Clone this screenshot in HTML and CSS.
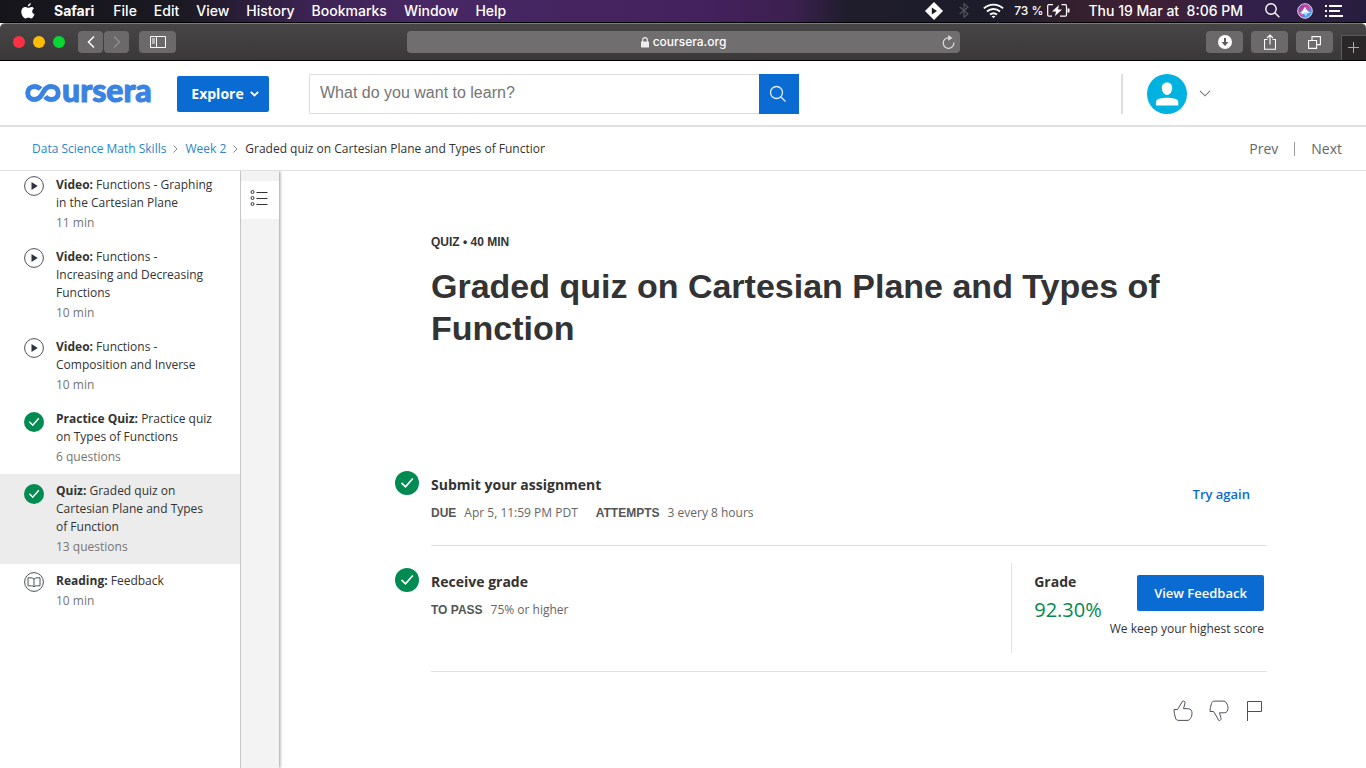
FILE: index.html
```html
<!DOCTYPE html>
<html lang="en">
<head>
<meta charset="utf-8">
<meta name="viewport" content="width=device-width, initial-scale=1">
<title>Graded quiz on Cartesian Plane and Types of Function | Coursera</title>
<link rel="stylesheet" href="styles.css">
</head>
<body>
<div class="menubar">
  <nav class="menus" aria-label="Menu bar">
    <svg class="apple" width="14" height="16" viewBox="0 0 14 16" fill="#fff" aria-hidden="true"><path d="M9.8 0c.1 1.600-1.200 3.300-2.900 3.400C6.700 1.800 8.200.2 9.800 0zM12.900 5.500c-2.600 1.600-2 4.700.6 5.800-.5 1.500-1.800 4-3.100 4.200-1.100.1-1.500-.7-2.900-.7s-1.800.7-2.900.7C2.500 15.400.3 11.800.3 8.800.3 5.800 2.200 4 4.200 4c1.300 0 2.200.8 3.200.8.9 0 2-.9 3.500-.8.8 0 1.600.6 2 1.500z"/></svg>
    <b>Safari</b><span>File</span><span>Edit</span><span>View</span><span>History</span><span>Bookmarks</span><span>Window</span><span>Help</span>
  </nav>
  <div class="status">
    <svg width="18" height="18" viewBox="0 0 18 18" aria-hidden="true"><path d="M9 0l9 9-9 9-9-9z" fill="#fff"/><path d="M6.800 5.500L12 9l-5.200 3.500z" fill="#1b1a24"/></svg>
    <svg class="bluetooth" width="10" height="15" viewBox="0 0 10 15" fill="none" stroke="#55525c" stroke-width="1.200" aria-hidden="true"><path d="M.7 4l8.300 7-4 3.300V.7l4 3.300-8.300 7"/></svg>
    <svg class="wifi" width="21" height="16" viewBox="0 0 21 16" fill="none" stroke="#fff" stroke-width="1.900" aria-hidden="true"><path d="M.9 5.400c5.500-5 13.700-5 19.200 0M4 8.500c3.800-3.400 9.200-3.400 13 0M7 11.600c2.200-1.800 4.800-1.800 7 0"/><path d="M8.600 13.300c1.200-.9 2.600-.9 3.800 0L10.500 15.200z" fill="#fff" stroke="none"/></svg>
    <span class="percent">73 %</span>
    <svg class="battery" width="23" height="13" viewBox="0 0 23 13" fill="none" stroke="#fff" stroke-width="1.200" aria-hidden="true"><path d="M6 .7H1.800Q.7.700.7 2v9q0 1.200 1.100 1.200H5M14.500.7h3.800q1.200 0 1.200 1.300v9q0 1.200-1.200 1.200H13"/><path d="M12 1L5 7.400h4L8 12l7-6.600h-4z" fill="#fff" stroke="none"/><path d="M21.500 4.500v4" stroke-width="2"/></svg>
    <time class="clock">Thu 19 Mar at&nbsp; 8:06 PM</time>
    <svg class="spotlight" width="15" height="15" viewBox="0 0 15 15" fill="none" stroke="#fff" stroke-width="1.400" aria-hidden="true"><circle cx="6" cy="6" r="5.200"/><path d="M9.800 9.800l4.500 4.500"/></svg>
    <svg class="siri" width="16" height="16" viewBox="0 0 16 16" aria-hidden="true"><defs><linearGradient id="siri" x1="0" y1="0" x2="1" y2="1"><stop offset="0" stop-color="#53479b"/><stop offset=".45" stop-color="#df3aa8"/><stop offset=".7" stop-color="#4f8fe8"/><stop offset="1" stop-color="#49d6e5"/></linearGradient></defs><circle cx="8" cy="8" r="7.300" fill="url(#siri)" stroke="#d9d7e6"/><path d="M2 10c3-1 4-4 6-6 1 3 4 5 6 6-3 0-4 0-5 4-1-3-3-4-7-4z" fill="#8ee9fa"/><path d="M8 4c1 3 3 5 5 6l-5-1-4 3z" fill="#fff"/></svg>
    <svg width="18" height="12" viewBox="0 0 18 12" stroke="#fff" stroke-width="2" aria-hidden="true"><path d="M0 1h2M4 1h13M0 6h2M4 6h11M0 11h2M4 11h14"/></svg>
  </div>
</div>

<div class="toolbar">
  <div class="tools">
    <span class="light red"></span><span class="light yellow"></span><span class="light green"></span>
    <div class="history">
      <button class="tool" aria-label="Back"><svg width="8" height="14" viewBox="0 0 8 14" fill="none" stroke="#fff" stroke-width="1.500"><path d="M7 1.500L1.500 7 7 12.500"/></svg></button>
      <button class="tool" aria-label="Forward"><svg width="8" height="14" viewBox="0 0 8 14" fill="none" stroke="#929091" stroke-width="1.300"><path d="M1 1.500L6.500 7 1 12.500"/></svg></button>
    </div>
    <button class="tool wide" aria-label="Show sidebar"><svg width="16" height="12" viewBox="0 0 16 12" fill="none" stroke="#fff"><path d="M.5.500h15v11H.5zM6.500.5v11M2 3h3M2 5h3M2 7h3"/></svg></button>
  </div>
  <div class="address">
    <svg width="8" height="11" viewBox="0 0 8 11" aria-hidden="true"><path d="M1.700 5V3Q1.700.7 4 .7T6.300 3v2" fill="none" stroke="#eee" stroke-width="1.200"/><rect y="4.500" width="8" height="6" rx=".5" fill="#eee"/></svg>
    <span>coursera.org</span>
    <button class="reload" aria-label="Reload"><svg width="13" height="14" viewBox="0 0 13 14"><path d="M11.800 7.500A5.300 5.300 0 1 1 6.500 2.800" fill="none" stroke="#ddd" stroke-width="1.200"/><path d="M6.200 0l4.300 2.900-4.300 2.800z" fill="#ddd"/></svg></button>
  </div>
  <div class="tools end">
    <button class="tool wide" aria-label="Downloads"><svg width="14" height="14" viewBox="0 0 14 14"><circle cx="7" cy="7" r="7" fill="#fff"/><path d="M7 3v5" stroke="#5c5a5b" stroke-width="2"/><path d="M3.500 7h7L7 11z" fill="#5c5a5b"/></svg></button>
    <button class="tool wide" aria-label="Share"><svg width="12" height="16" viewBox="0 0 12 16" fill="none" stroke="#fff" stroke-width="1.100"><path d="M3.500 5.500h-3v9.800h11V5.500h-3M6 10.500V1M3 4l3-3 3 3"/></svg></button>
    <button class="tool wide" aria-label="Show all tabs"><svg width="13" height="13" viewBox="0 0 13 13" fill="none" stroke="#fff" stroke-width="1.100"><path d="M.6 4.500h8v7.900h-8zM4 4.500V.6h8.400v8H8.600"/></svg></button>
    <button class="newtab" aria-label="New tab"><svg width="12" height="12" viewBox="0 0 12 12" stroke="#aaa"><path d="M5.500 0v11M0 5.500h11"/></svg></button>
  </div>
</div>

<header class="header">
  <a class="logo" href="#" aria-label="Coursera">
    <svg class="logo-mark" width="37" height="20" viewBox="0 0 37 20" fill="none" stroke="#3a83e3" stroke-width="5" aria-hidden="true"><path d="M15.500 6.200C13.800 4.300 11.900 3.500 9.700 3.500 5.500 3.500 2.700 6.300 2.700 10s2.800 6.500 7 6.500c3.200 0 5.100-1.700 6.900-4.500l2.200-3.800C20.500 5.300 22.800 3.500 26.200 3.500c4.200 0 7 2.800 7 6.500s-2.800 6.500-7 6.500c-2.500 0-4.600-1-6-2.900"/></svg>
    <span>ursera</span>
  </a>
  <button class="explore">Explore <svg width="9" height="6" viewBox="0 0 9 6" fill="none" stroke="#fff" stroke-width="1.800" aria-hidden="true"><path d="M.8.900l3.700 3.600L8.200.9"/></svg></button>
  <form class="search" role="search">
    <input type="search" aria-label="Search courses" placeholder="What do you want to learn?">
    <button type="button" aria-label="Search"><svg width="18" height="18" viewBox="0 0 18 18" fill="none" stroke="#e2edfa" stroke-width="1.300"><circle cx="7.500" cy="7.500" r="6"/><path d="M12 12l4.500 4.500"/></svg></button>
  </form>
  <button class="account" aria-label="Account menu">
    <svg width="40" height="40" viewBox="0 0 40 40"><circle cx="20" cy="20" r="20" fill="#00b2e0"/><path d="M20 8.500c3.500 0 5.200 2.300 5.200 5.300 0 3.500-2 7.200-5.200 7.200s-5.200-3.700-5.200-7.200c0-3 1.700-5.300 5.200-5.300zM9 31.500v-3.700C9 24.500 16 23.700 20 23.700s11.300.8 11.300 4.100v3.700z" fill="#fff"/></svg>
    <svg width="12" height="7" viewBox="0 0 12 7" fill="none" stroke="#777" stroke-width="1.100"><path d="M1 .8l5 5 5-5"/></svg>
  </button>
</header>

<div class="trail">
  <nav class="crumbs" aria-label="Breadcrumb">
    <a href="#">Data Science Math Skills</a>
    <svg width="5" height="8" viewBox="0 0 5 8" fill="none" stroke="#888" aria-hidden="true"><path d="M.5.500L4 4 .5 7.500"/></svg>
    <a href="#">Week 2</a>
    <svg width="5" height="8" viewBox="0 0 5 8" fill="none" stroke="#888" aria-hidden="true"><path d="M.5.500L4 4 .5 7.500"/></svg>
    <span class="current">Graded quiz on Cartesian Plane and Types of Function</span>
  </nav>
  <nav class="pager" aria-label="Lesson"><a href="#">Prev</a><span class="bar"></span><a href="#">Next</a></nav>
</div>

<svg class="sprite" aria-hidden="true">
  <symbol id="play" viewBox="0 0 20 20"><circle cx="10" cy="10" r="9.400" fill="#fff" stroke="#4b515b"/><path d="M7.500 6l6.200 4-6.200 4z" fill="#2d3440"/></symbol>
  <symbol id="check" viewBox="0 0 24 24"><circle cx="12" cy="12" r="12" fill="#018a51"/><path d="M6.500 11.800l4 4 7.300-8.300" fill="none" stroke="#fff" stroke-width="1.700"/></symbol>
  <symbol id="book" viewBox="0 0 20 20" fill="none" stroke="#4b515b"><circle cx="10" cy="10" r="9.400"/><path d="M10 7Q8.500 5.800 7 5.800H4v8h3.500q1.500 0 2.500 1 1-1 2.500-1H16v-8h-3Q11.500 5.800 10 7v7.500"/></symbol>
</svg>

<div class="body">
  <nav class="lessons" aria-label="Lessons">
    <a class="lesson" href="#"><svg class="icon"><use href="#play"/></svg><span><b>Video:</b> Functions - Graphing in the Cartesian Plane<small>11 min</small></span></a>
    <a class="lesson" href="#"><svg class="icon"><use href="#play"/></svg><span><b>Video:</b> Functions - Increasing and Decreasing Functions<small>10 min</small></span></a>
    <a class="lesson" href="#"><svg class="icon"><use href="#play"/></svg><span><b>Video:</b> Functions - Composition and Inverse<small>10 min</small></span></a>
    <a class="lesson done" href="#"><svg class="icon"><use href="#check"/></svg><span><b>Practice Quiz:</b> Practice quiz on Types of Functions<small>6 questions</small></span></a>
    <a class="lesson done active" href="#" aria-current="page"><svg class="icon"><use href="#check"/></svg><span><b>Quiz:</b> Graded quiz on Cartesian Plane and Types of Function<small>13 questions</small></span></a>
    <a class="lesson" href="#"><svg class="icon"><use href="#book"/></svg><span><b>Reading:</b> Feedback<small>10 min</small></span></a>
  </nav>
  <div class="rail">
    <button aria-label="Toggle lesson list"><svg width="18" height="18" viewBox="0 0 18 18" fill="none" stroke="#333"><circle cx="2.500" cy="3" r="1.500"/><circle cx="2.500" cy="9" r="1.500"/><circle cx="2.500" cy="15" r="1.500"/><path d="M6.500 3.500h11M6.500 9.500h11M6.500 15.500h11"/></svg></button>
  </div>
  <main class="main">
    <div class="intro">
      <p class="kind">QUIZ • 40 MIN</p>
      <h1>Graded quiz on Cartesian Plane and Types of Function</h1>
    </div>
    <section class="step">
      <svg class="mark"><use href="#check"/></svg>
      <div class="row submit">
        <div class="about">
          <h2>Submit your assignment</h2>
          <p class="facts"><span><b>DUE</b>Apr 5, 11:59 PM PDT</span><span><b>ATTEMPTS</b>3 every 8 hours</span></p>
        </div>
        <button class="again">Try again</button>
      </div>
    </section>
    <section class="step">
      <svg class="mark"><use href="#check"/></svg>
      <div class="row receive">
        <div class="about">
          <h2>Receive grade</h2>
          <p class="facts"><span><b>TO PASS</b>75% or higher</span></p>
        </div>
        <div class="result">
          <div class="grade"><h2>Grade</h2><p class="score">92.30%</p></div>
          <div class="feedback"><button class="view">View Feedback</button><p>We keep your highest score</p></div>
        </div>
      </div>
    </section>
    <div class="rate">
      <button aria-label="Like"><svg width="20" height="22" viewBox="0 0 20 22"><path d="M1 9.500h3.500L8.500 3Q9 1 10.300 1c1.700 0 2 1.600 1.500 3l-1.300 4.700h4.800c2.500 0 3.700 2.200 3.700 4.500s-.8 4-1.500 5.200c-.8 1.500-1.800 2-3.500 2H6c-2 0-3-.6-3.500-2.400Q1 13.500 1 9.500z"/></svg></button>
      <button aria-label="Dislike"><svg width="20" height="22" viewBox="0 0 20 22"><path d="M1 11.500h3.500L8.500 18Q9 20.500 10.300 20.500c1.700 0 2-1.600 1.500-3L10.500 12.800h4.800c2.500 0 3.700-2.200 3.700-4.500s-.8-4-1.500-5.200c-.8-1.500-1.800-2-3.500-2H6c-2 0-3 .6-3.500 2.400Q1 7.500 1 11.500z"/></svg></button>
      <button aria-label="Report"><svg width="18" height="22" viewBox="0 0 18 22"><path d="M2.500 21V1.500h14v10h-14"/></svg></button>
    </div>
  </main>
</div>
</body>
</html>
```
FILE: styles.css
```css
* { box-sizing: border-box; }
body {
  margin: 0;
  min-height: 100vh;
  display: flex;
  flex-direction: column;
  background: #fff;
  color: #333;
  font: 12px/18px "Open Sans", sans-serif;
}
h1, h2, p { margin: 0; }
a { color: inherit; text-decoration: none; }
button { border: 0; padding: 0; background: none; color: inherit; font: inherit; cursor: pointer; }
svg { flex: none; display: block; }
.sprite { display: none; }

/* System menu bar */
.menubar {
  display: flex;
  justify-content: space-between;
  align-items: center;
  height: 23px;
  padding: 0 23px 1px 21px;
  border-bottom: 1px solid #000;
  background: linear-gradient(90deg, #15151b 0, #1a1921 13%, #3d2354 23%, #472864 32%, #43215c 52%, #3c2050 58%, #1f1d2c 62%, #1c1b29 73%, #35202f 79%, #3f2032 84%, #33204a 91%, #261d3e 100%);
  color: #fff;
  font: 500 14px/22px Inter, sans-serif;
}
.menus, .status { display: flex; align-items: center; white-space: nowrap; }
.menus { gap: 17px; }
.menus b { margin: 0 2px; }
.status { gap: 10px; }
.percent { font-size: 12px; }
.bluetooth { margin-left: 6px; }
.wifi { margin-left: 4px; }
.battery { margin-left: -6px; }
.clock { margin-left: 8px; }
.spotlight { margin-left: 12px; }
.siri { margin: 0 2px 0 7px; }

/* Browser toolbar */
.toolbar {
  display: grid;
  grid-template-columns: 1fr 41% 1fr;
  align-items: center;
  height: 38px;
  border-top: 1px solid #7c7b7c;
  border-bottom: 1px solid #000;
  border-radius: 5px 5px 0 0;
  background: linear-gradient(#474546, #3a3839);
}
.tools { display: flex; align-items: center; height: 100%; padding-left: 13px; }
.light { width: 12px; height: 12px; border-radius: 50%; margin-right: 8px; }
.red { background: #fc3144; }
.yellow { background: #fdbd05; }
.green { background: #07d734; }
.history { display: flex; gap: 1px; margin: 0 10px 0 5px; }
.tool {
  display: grid;
  place-items: center;
  width: 25px;
  height: 22px;
  border-radius: 4px;
  background: #6b696a;
}
.wide { width: 37px; }
.address {
  display: flex;
  align-items: center;
  justify-content: center;
  gap: 4px;
  height: 22px;
  margin: 0 3px 0 4px;
  padding: 0 5px 0 22px;
  border-radius: 4px;
  background: #706e6f;
  color: #fff;
  font: 500 12px/22px Inter, sans-serif;
}
.address svg:first-child, .reload { margin-left: auto; }
.reload svg:first-child { margin-left: 0; }
.end { justify-content: flex-end; gap: 8px; padding: 0; }
.newtab {
  display: grid;
  place-items: center;
  align-self: flex-end;
  width: 25px;
  height: 25px;
  border: 1px solid #5d5b5c;
  border-width: 1px 0 0 1px;
  background: #292728;
}

/* Site header */
.header {
  display: flex;
  align-items: center;
  height: 66px;
  padding: 0 155px 0 25px;
  border-bottom: 2px solid #e1e1e1;
}
.logo { display: flex; align-items: center; width: 128px; color: #3a83e3; font: 900 32px/36px Lato, sans-serif; }
.logo span { margin-top: -7px; -webkit-text-stroke: 1px #3a83e3; }
.explore {
  display: flex;
  align-items: center;
  justify-content: center;
  gap: 6px;
  width: 92px;
  height: 36px;
  margin: 1px 40px 0 24px;
  padding-left: 4px;
  border-radius: 2px;
  background: #0a6bd3;
  color: #fff;
  font-size: 14px;
  font-weight: 700;
}
.search { display: flex; width: 490px; height: 40px; margin-top: 1px; }
.search input {
  flex: 1;
  min-width: 0;
  padding: 0 10px 1px;
  border: 1px solid #dcdcdc;
  border-right: 0;
  border-radius: 2px 0 0 2px;
  font: 16px/20px "Liberation Sans", Arial, sans-serif;
  outline: 0;
}
.search input::placeholder { color: #757575; }
.search button { display: grid; place-items: center; width: 40px; padding-right: 3px; background: #0a6bd3; }
.account {
  display: flex;
  align-items: center;
  gap: 12px;
  height: 40px;
  margin: 1px 0 0 auto;
  padding-left: 24px;
  border-left: 2px solid #dfdfdf;
}

/* Breadcrumb row */
.trail {
  display: flex;
  align-items: center;
  justify-content: space-between;
  height: 44px;
  padding: 0 24px 0 32px;
  border-bottom: 1px solid #e1e1e1;
}
.crumbs { display: flex; align-items: center; gap: 7px; white-space: nowrap; }
.crumbs a { color: #2a86ca; }
.current { max-width: 300px; overflow: hidden; }
.pager { display: flex; align-items: center; gap: 16px; color: #666; font-size: 14px; }
.bar { width: 1px; height: 14px; background: #999; }

/* Lesson list */
.body { flex: 1; display: flex; }
.lessons { flex: none; width: 240px; }
.lesson { display: flex; gap: 12px; padding: 8px 24px; }
.lesson:first-child { padding-top: 5px; }
.lesson small { display: block; margin-top: 2px; color: #757575; font-size: 12px; }
.active { background: #ececec; }
.icon { width: 20px; height: 20px; }
.done .icon { margin-top: 2px; }
.rail {
  flex: none;
  width: 39px;
  padding-top: 10px;
  border-left: 1px solid #c6c6c6;
  background: #f3f3f3;
  box-shadow: 1px 0 3px #999;
  clip-path: inset(0 -5px 0 0);
}
.rail button { display: grid; place-items: center; width: 100%; height: 38px; padding: 0 3px 4px 0; background: #fff; }

/* Quiz overview */
.main { flex: 1; min-width: 0; padding: 62px 99px 40px 116px; }
.intro { padding: 0 36px 116px; }
.kind { font: 700 12px/18px "Liberation Sans", Arial, sans-serif; }
h1 { margin-top: 14px; font: 700 34px/42px "Liberation Sans", Arial, sans-serif; }
h2 { font-size: 14px; line-height: 20px; font-weight: 700; }
.step { display: flex; gap: 12px; }
.mark { width: 24px; height: 24px; margin-top: 6px; }
.row { flex: 1; display: flex; justify-content: space-between; border-bottom: 1px solid #e1e1e1; }
.about { padding-top: 10px; }
.facts { display: flex; gap: 18px; margin-top: 9px; color: #666; }
.facts b { margin-right: 8px; color: #555; font-family: "Liberation Sans", Arial, sans-serif; }
.submit { height: 81px; }
.again { align-self: flex-start; margin: 20px 17px 0 0; color: #0a6bd3; font-size: 13px; font-weight: 600; }
.submit, .receive { margin-bottom: 16px; }
.receive { height: 110px; }
.result { display: flex; gap: 8px; height: 90px; margin-top: 1px; padding: 0 3px 0 22px; border-left: 1px solid #e1e1e1; }
.grade { padding-top: 9px; }
.score { margin-top: 4px; color: #018a51; font-size: 20px; line-height: 28px; }
.feedback { padding-top: 12px; text-align: right; }
.view { width: 127px; height: 36px; margin-bottom: 9px; border-radius: 2px; background: #0a6bd3; color: #fff; font-size: 13px; font-weight: 600; }
.rate { display: flex; justify-content: flex-end; gap: 16px; margin-top: 12px; padding-right: 4px; }
.rate svg { fill: none; stroke: #4b515b; }
```
